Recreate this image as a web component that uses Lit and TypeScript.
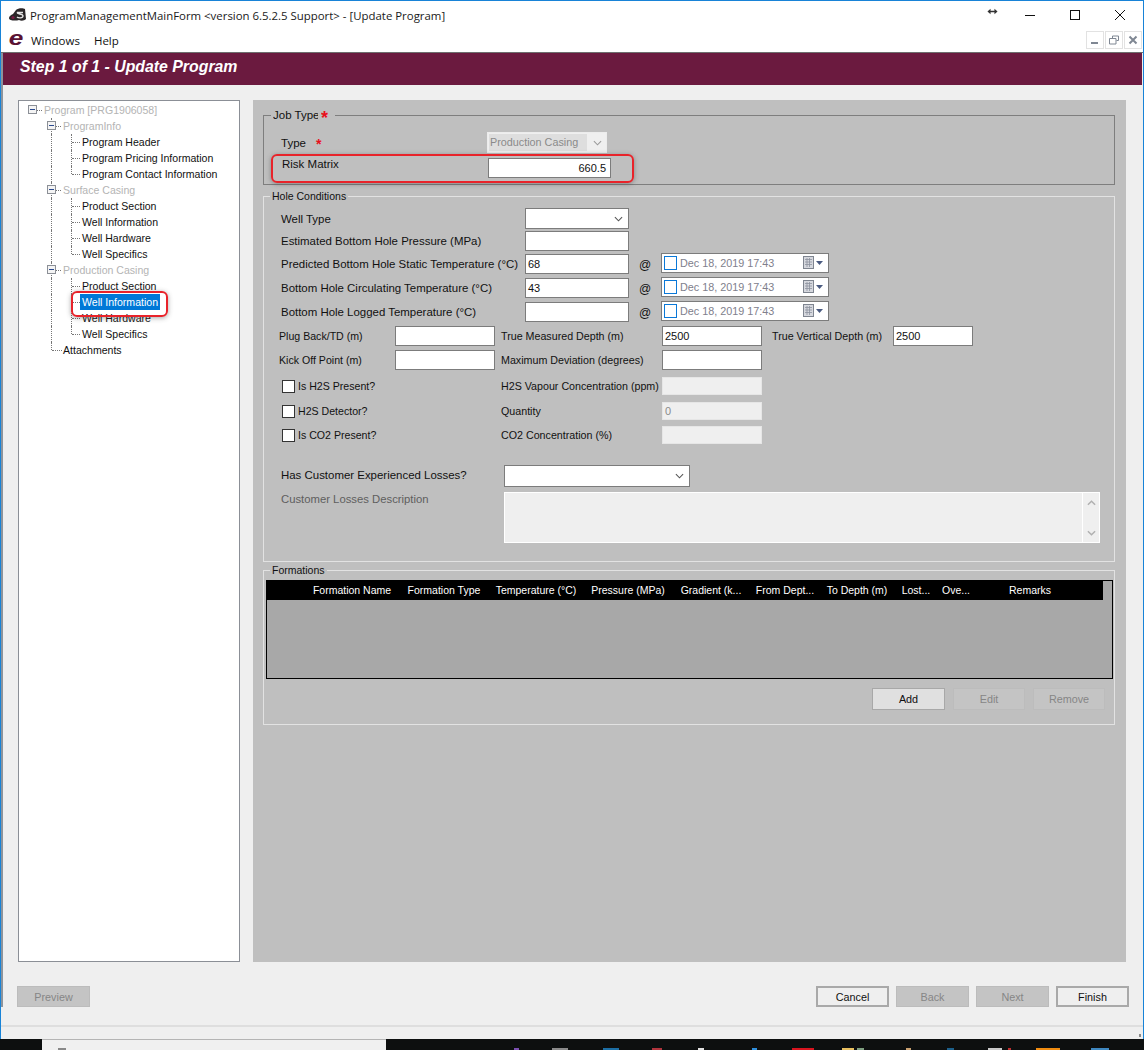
import { css, html, LitElement, svg } from "lit";
import { customElement } from "lit/decorators.js";

type TreeNode = { label: string; level: number; group?: boolean; last?: boolean; selected?: boolean };

const TREE: TreeNode[] = [
  { label: "Program [PRG1906058]", level: 0, group: true },
  { label: "ProgramInfo", level: 1, group: true },
  { label: "Program Header", level: 2 },
  { label: "Program Pricing Information", level: 2 },
  { label: "Program Contact Information", level: 2, last: true },
  { label: "Surface Casing", level: 1, group: true },
  { label: "Product Section", level: 2 },
  { label: "Well Information", level: 2 },
  { label: "Well Hardware", level: 2 },
  { label: "Well Specifics", level: 2, last: true },
  { label: "Production Casing", level: 1, group: true },
  { label: "Product Section", level: 2 },
  { label: "Well Information", level: 2, selected: true },
  { label: "Well Hardware", level: 2 },
  { label: "Well Specifics", level: 2, last: true },
  { label: "Attachments", level: 1, last: true },
];

const COLUMNS: [string, number][] = [
  ["Formation Name", 92],
  ["Formation Type", 92],
  ["Temperature (°C)", 92],
  ["Pressure (MPa)", 92],
  ["Gradient (k...", 74],
  ["From Dept...", 74],
  ["To Depth (m)", 70],
  ["Lost...", 48],
  ["Ove...", 32],
  ["Remarks", 116],
];

// tops of the tray and pinned icons, the rest falls below the screenshot
const TASK_ICONS: [number, number, string][] = [
  [514, 5, "#7b4fb0"],
  [552, 16, "#8a8a8a"],
  [603, 16, "#1c6ea4"],
  [652, 10, "#b0343c"],
  [698, 6, "#e0e0e0"],
  [752, 5, "#2f8fdc"],
  [792, 22, "#d8141e"],
  [842, 12, "#e8c060"],
  [857, 7, "#7f9f80"],
  [906, 5, "#c8a070"],
  [947, 7, "#1c5f8a"],
  [988, 14, "#c8c8c8"],
  [1008, 3, "#c03030"],
  [1036, 24, "#f08c10"],
  [1091, 18, "#3f88c0"],
];

const chevron = svg`<svg class="chev" viewBox="0 0 10 6"><path d="M1 1l4 4 4-4" fill="none" stroke="currentColor" stroke-width="1.2"/></svg>`;

@customElement("app-root")
export class AppRoot extends LitElement {
  static override styles = css`
    :host {
      display: block;
      width: 1144px;
      height: 1050px;
      overflow: hidden;
      position: relative;
      font-family: "Liberation Sans", Arial, sans-serif;
      font-size: 12px;
      color: #111;
      background: #0d0f0f;
    }

    .window {
      height: 1039px;
      box-sizing: border-box;
      border: 1px solid #1883d7;
      border-bottom: none;
      background: #fff;
      display: flex;
      flex-direction: column;
    }

    .titlebar {
      height: 27px;
      display: flex;
      align-items: center;
      position: relative;
      font-family: "Open Sans", sans-serif;
      font-size: 11.42px;
      color: #1a1a1a;
    }

    .app-icon {
      width: 17px;
      height: 14px;
      margin-left: 8px;
      margin-right: 4px;
      margin-top: 1px;
    }

    .title-text {
      white-space: nowrap;
      padding-top: 1px;
    }

    .win-controls {
      position: absolute;
      top: 0;
      right: 1px;
      display: flex;
      align-items: center;
    }

    .resize {
      position: absolute;
      top: 7px;
      left: 986px;
      width: 11px;
      height: 7px;
    }

    .win-btn {
      width: 45px;
      height: 27px;
      display: flex;
      align-items: center;
      justify-content: center;
    }

    .win-btn svg {
      width: 12px;
      height: 12px;
    }

    .menubar {
      height: 24px;
      display: flex;
      align-items: center;
      font-family: "Open Sans", sans-serif;
      font-size: 11.5px;
      position: relative;
      box-sizing: border-box;
    }

    .logo-e {
      width: 16px;
      margin-left: 7px;
      margin-right: 7px;
      font: italic bold 21px/20px "Liberation Sans", sans-serif;
      color: #5a1233;
      text-align: center;
      margin-top: -5px;
      transform: scaleX(1.25);
    }

    .menubar span.item {
      margin-right: 14px;
    }

    .mdi {
      margin-left: auto;
      margin-right: 1px;
      display: flex;
      gap: 1px;
    }

    .mdi div {
      width: 18px;
      height: 18px;
      box-sizing: border-box;
      border: 1px solid #e2e2e2;
      display: flex;
      align-items: center;
      justify-content: center;
    }

    .mdi svg {
      width: 10px;
      height: 10px;
    }

    .frame {
      flex: 1;
      display: flex;
      flex-direction: column;
      background: #efefef;
      border-top: 1px solid #6e6e6e;
      min-height: 0;
    }

    .content {
      border-left: 2px solid #8d949c;
    }

    .banner {
      height: 32px;
      margin-right: 1px;
      background: #6b1a3f;
      color: #fff;
      font: italic bold 15.85px/28px "Liberation Sans", Arial, sans-serif;
      padding-left: 17px;
    }

    .body {
      display: grid;
      grid-template-columns: 222px 873px;
      column-gap: 13px;
      height: 862px;
      padding: 15px 0 0 15px;
    }

    .tree {
      box-sizing: border-box;
      background: #fff;
      border: 1px solid #8b8f96;
      padding-top: 1px;
    }

    .node {
      height: 16px;
      position: relative;
      line-height: 16px;
      white-space: nowrap;
      font-size: 10.55px;
    }

    .node .text {
      position: absolute;
      top: 0;
      height: 16px;
      padding: 0 2px;
    }

    .node.group .text {
      color: #b4b4b4;
    }

    .node.selected .text {
      background: #0078d7;
      color: #fff;
    }

    .guide-v {
      position: absolute;
      top: 0;
      bottom: 0;
      border-left: 1px dotted #777;
    }

    .guide-v.half {
      bottom: 8px;
    }

    .guide-h {
      position: absolute;
      top: 8px;
      border-top: 1px dotted #777;
    }

    .expander {
      position: absolute;
      top: 3px;
      width: 9px;
      height: 9px;
      box-sizing: border-box;
      border: 1px solid #8b8f96;
      background: #f4f4f4;
    }

    .expander::after {
      content: "";
      position: absolute;
      left: 1px;
      right: 1px;
      top: 3px;
      height: 1px;
      background: #2a4a90;
    }

    .panel {
      background: #bfbfbf;
      padding: 15px 0 0 10px;
      box-sizing: border-box;
    }

    .group-box {
      width: 852px;
      box-sizing: border-box;
      border: 1px solid #e2e2e2;
      position: relative;
    }

    .group-box > .legend {
      position: absolute;
      top: -8px;
      left: 6px;
      padding: 0 2px;
      background: #bfbfbf;
      line-height: 15px;
      font-size: 10.5px;
    }

    .job {
      height: 70px;
      border-color: #7e7e7e;
    }

    .job > .legend {
      display: flex;
      left: 7px;
      width: 60px;
      overflow: hidden;
    }

    .job .legend span {
      display: block;
      width: 45px;
      overflow: hidden;
      white-space: nowrap;
      font-size: 11.5px;
    }

    .star {
      color: #e8101c;
      font-weight: bold;
      font-size: 14px;
      line-height: 17px;
    }

    .job .legend .star {
      width: auto;
      margin-left: 3px;
      font-size: 18px;
      line-height: 20px;
    }

    .job-type {
      display: flex;
      align-items: center;
      height: 21px;
      margin-top: 16px;
      padding-left: 17px;
      font-size: 11.5px;
    }

    .job-type .lbl {
      width: 35px;
    }

    .job-type .star {
      width: 171px;
      padding-top: 4px;
    }

    .sel-off {
      width: 120px;
      height: 21px;
      box-sizing: border-box;
      border: 1px solid #ececec;
      background: #efefef;
      display: flex;
      align-items: center;
      color: #8a8a8a;
      font-size: 10.8px;
      padding: 1px;
    }

    .sel-off .val {
      width: 98px;
      height: 17px;
      line-height: 17px;
      padding-left: 1px;
      box-sizing: border-box;
      background: #dedede;
    }

    .sel-off .chev {
      color: #9a9a9a;
      margin-left: 6px;
    }

    .chev {
      width: 9px;
      height: 6px;
    }

    .risk {
      display: flex;
      align-items: flex-start;
      height: 20px;
      margin-top: 5px;
      padding-left: 18px;
      font-size: 11.5px;
    }

    .risk .lbl {
      width: 206px;
    }

    .risk .field {
      width: 123px;
      text-align: right;
      padding-right: 4px;
    }

    .field {
      height: 20px;
      box-sizing: border-box;
      border: 1px solid #7c7c7c;
      background: #fff;
      line-height: 18px;
      padding-left: 2px;
      font-size: 11px;
      flex: none;
    }

    .field.off {
      height: 18px;
      margin-top: 1px;
      line-height: 16px;
      border: 1px solid #e6e6e6;
      background: #efefef;
      color: #8a8a8a;
    }

    .w104 {
      width: 104px;
    }

    .w100 {
      width: 100px;
    }

    .w80 {
      width: 80px;
    }

    .select {
      width: 104px;
      height: 21px;
      box-sizing: border-box;
      border: 1px solid #7c7c7c;
      background: #fff;
      display: flex;
      align-items: center;
      justify-content: flex-end;
      padding-right: 5px;
      color: #555;
    }

    .select.wide {
      width: 186px;
      height: 22px;
    }

    .hole {
      height: 366px;
      margin-top: 11px;
      padding-top: 11px;
    }

    .row {
      display: flex;
      align-items: flex-start;
      white-space: nowrap;
      line-height: 20px;
      font-size: 11.45px;
    }

    .row.h23 {
      height: 23px;
    }

    .row.h24 {
      height: 24px;
    }

    .row.h25 {
      height: 25px;
    }

    .wide-label {
      width: 244px;
      padding-left: 17px;
      box-sizing: content-box;
      flex: none;
    }

    .well-type {
      line-height: 22px;
    }

    .at {
      width: 32px;
      padding-left: 10px;
      margin-top: 1px;
      box-sizing: border-box;
      font-size: 12px;
      flex: none;
    }

    .date {
      width: 168px;
      height: 20px;
      margin-top: -1px;
      box-sizing: border-box;
      border: 1px solid #7c7c7c;
      background: #fff;
      display: flex;
      align-items: center;
      color: #80808c;
      font-size: 10.8px;
      padding-left: 2px;
      flex: none;
    }

    .date i {
      width: 13px;
      height: 14px;
      box-sizing: border-box;
      border: 1px solid #0a78d8;
      background: #fff;
      margin-right: 3px;
      flex: none;
    }

    .date .cal {
      width: 20px;
      height: 14px;
      margin-left: auto;
      margin-right: 5px;
    }

    .lbl-a {
      width: 116px;
      padding-left: 15px;
      font-size: 10.6px;
      flex: none;
    }

    .lbl-b {
      width: 161px;
      margin-left: 6px;
      font-size: 10.7px;
      flex: none;
    }

    .lbl-b.flush {
      margin-left: 0;
    }

    .lbl-c {
      width: 121px;
      margin-left: 10px;
      font-size: 10.7px;
      flex: none;
    }

    .check-cell {
      width: 219px;
      display: flex;
      align-items: center;
      height: 20px;
      padding-left: 18px;
      font-size: 10.6px;
      flex: none;
    }

    .check-cell i {
      width: 13px;
      height: 13px;
      box-sizing: border-box;
      border: 1px solid #333;
      background: #fff;
      margin-right: 3px;
      flex: none;
    }

    .spaced {
      margin-top: 20px;
    }

    .loss-label {
      width: 223px;
      padding-left: 17px;
      flex: none;
    }

    .desc-row {
      margin-top: 5px;
      display: flex;
      align-items: flex-start;
      font-size: 11.3px;
    }

    .desc-row .loss-label {
      color: #5e5e5e;
      line-height: 14px;
    }

    .desc {
      width: 596px;
      height: 51px;
      box-sizing: border-box;
      border: 1px solid #fff;
      background: #efefef;
      display: flex;
      justify-content: flex-end;
    }

    .desc .bar {
      width: 16px;
      border-left: 1px solid #fff;
      display: flex;
      flex-direction: column;
      justify-content: space-between;
      align-items: center;
      padding: 7px 0 6px;
      color: #b0b0b0;
    }

    .desc .bar .chev.up {
      transform: rotate(180deg);
    }

    .formations {
      height: 155px;
      margin-top: 8px;
      padding: 9px 0 0 2px;
    }

    .table {
      width: 847px;
      height: 99px;
      box-sizing: border-box;
      border: 1px solid #000;
      background: #a8a8a8;
    }

    .thead {
      height: 19px;
      width: 836px;
      background: #000;
      color: #fff;
      display: flex;
      padding-left: 39px;
      box-sizing: border-box;
      line-height: 19px;
      font-size: 10.5px;
      white-space: nowrap;
    }

    .thead div {
      text-align: center;
      flex: none;
    }

    .grid-actions {
      display: flex;
      justify-content: flex-end;
      gap: 8px;
      margin-top: 9px;
      padding-right: 9px;
    }

    .btn {
      width: 73px;
      height: 21px;
      box-sizing: border-box;
      background: #c4c4c4;
      border: 1px solid #bcbcbc;
      color: #868686;
      display: flex;
      align-items: center;
      justify-content: center;
      font-size: 10.8px;
      flex: none;
    }

    .btn.on {
      color: #111;
      background: #efefef;
      border: 2px solid #a9a9a9;
    }

    .btn.add {
      height: 22px;
      background: #e0e0e0;
      border: 1px solid #a8a8a8;
    }

    .grid-actions .btn:not(.add) {
      width: 72px;
      height: 22px;
    }

    .footer {
      display: flex;
      gap: 7px;
      padding: 24px 14px 0 14px;
    }

    .footer .btn:first-child {
      margin-right: auto;
    }

    .status {
      margin-top: 18px;
      flex: 1;
      border-top: 2px solid #dedede;
      position: relative;
    }

    .status::after {
      content: "";
      position: absolute;
      right: 2px;
      bottom: 2px;
      width: 2px;
      height: 3px;
      background: #8a8a8a;
    }

    .taskbar {
      height: 11px;
      position: relative;
      background: #0d0f0f;
    }

    .search {
      position: absolute;
      left: 42px;
      top: 0;
      width: 344px;
      height: 11px;
      box-sizing: border-box;
      background: #f0f0f0;
      border-top: 1px solid #b4b4b4;
    }

    .search::after {
      content: "";
      position: absolute;
      left: 16px;
      top: 8px;
      width: 8px;
      height: 2px;
      background: #888;
    }

    .task-icon {
      position: absolute;
      top: 9px;
      height: 2px;
    }

    .callout {
      position: absolute;
      box-sizing: border-box;
      border: 2px solid #e8232a;
      border-radius: 6px;
      box-shadow: 0 1px 5px rgba(60, 60, 60, 0.45);
      pointer-events: none;
    }

    .callout.risk-mark {
      left: 271px;
      top: 154px;
      width: 363px;
      height: 29px;
    }

    .callout.tree-mark {
      left: 71px;
      top: 291px;
      width: 97px;
      height: 26px;
    }
  `;

  private renderNode(node: TreeNode, index: number) {
    const trunkEnd = TREE.length - 1;
    const inTrunk = node.level >= 1;
    const left = node.level === 0 ? 42 : node.level === 1 ? 61 : 80;
    return html`
      <div class="node ${node.group ? "group" : ""} ${node.selected ? "selected" : ""}">
        ${inTrunk
          ? html`<span class="guide-v ${index === trunkEnd ? "half" : ""}" style="left:32px"></span>`
          : ""}
        ${node.level === 2
          ? html`<span class="guide-v ${node.last ? "half" : ""}" style="left:52px"></span>
              <span class="guide-h" style="left:53px;width:8px"></span>`
          : ""}
        ${node.level === 1 && !node.group
          ? html`<span class="guide-h" style="left:33px;width:10px"></span>`
          : ""}
        ${node.group
          ? html`<span class="expander" style="left:${node.level === 0 ? 9 : 28}px"></span>
              <span class="guide-h" style="left:${node.level === 0 ? 18 : 37}px;width:5px"></span>`
          : ""}
        <span class="text" style="left:${left - 19}px">${node.label}</span>
      </div>
    `;
  }

  private renderDate() {
    return html`
      <div class="date">
        <i></i>Dec 18, 2019 17:43
        <svg class="cal" viewBox="0 0 20 14">
          <rect x="0.5" y="0.5" width="10" height="12" fill="#d6d8de" stroke="#7f8590" />
          <path d="M2 3.500h7M2 6h7M2 8.500h7M4 2v9M6.500 2v9" stroke="#8d93a0" stroke-width="0.8" />
          <path d="M13 5h7l-3.500 4z" fill="#4a5a80" />
        </svg>
      </div>
    `;
  }

  override render() {
    return html`
      <div class="window">
        <div class="titlebar">
          <svg class="app-icon" viewBox="0 0 17 14">
            <path d="M0 10c0-2 2-3 4-4l3-4c2-2 7-2 9-1l1 10c-2 2-5 2-7 1-3 1-10 1-10-2z" fill="#2a2628" />
            <path d="M8 4.500h6M8 4.500c0 2 6 1 6 3.500s-5 2-6 1" fill="none" stroke="#e6e6e6" stroke-width="1.300" />
            <circle cx="4" cy="9.500" r="1.600" fill="#7a1a44" />
          </svg>
          <span class="title-text">ProgramManagementMainForm &lt;version 6.5.2.5 Support&gt; - [Update Program]</span>
          <svg class="resize" viewBox="0 0 13 9">
            <path d="M0 4.500 4 1v2.500h5V1l4 3.500L9 8V5.500H4V8z" fill="#333" />
          </svg>
          <div class="win-controls">
            <div class="win-btn">
              <svg viewBox="0 0 12 12"><path d="M1 6.500h10" stroke="#111" /></svg>
            </div>
            <div class="win-btn">
              <svg viewBox="0 0 12 12"><rect x="1.500" y="1.500" width="9" height="9" fill="none" stroke="#111" /></svg>
            </div>
            <div class="win-btn">
              <svg viewBox="0 0 12 12"><path d="M1 1l10 10M11 1 1 11" stroke="#111" /></svg>
            </div>
          </div>
        </div>
        <div class="menubar">
          <span class="logo-e">e</span>
          <span class="item">Windows</span>
          <span class="item">Help</span>
          <div class="mdi">
            <div>
              <svg viewBox="0 0 10 10"><path d="M1 8h7" stroke="#7f8793" stroke-width="2" /></svg>
            </div>
            <div>
              <svg viewBox="0 0 10 10">
                <path d="M3.500 3V1h6v4.500h-2M.5 3.500h6.500V9H.5z" fill="none" stroke="#7f8793" />
              </svg>
            </div>
            <div>
              <svg viewBox="0 0 10 10"><path d="M1.500 1.500l7 7M8.500 1.500l-7 7" stroke="#7f8793" stroke-width="2" /></svg>
            </div>
          </div>
        </div>
        <div class="frame">
          <div class="content">
            <div class="banner">Step 1 of 1 - Update Program</div>
            <div class="body">
              <div class="tree">${TREE.map((node, i) => this.renderNode(node, i))}</div>
              <div class="panel">
                <div class="group-box job">
                  <div class="legend"><span>Job Type</span><span class="star">*</span></div>
                  <div class="job-type">
                    <span class="lbl">Type</span>
                    <span class="star">*</span>
                    <div class="sel-off"><div class="val">Production Casing</div>${chevron}</div>
                  </div>
                  <div class="risk">
                    <span class="lbl">Risk Matrix</span>
                    <div class="field">660.5</div>
                  </div>
                </div>

                <div class="group-box hole">
                  <div class="legend">Hole Conditions</div>
                  <div class="row h23">
                    <div class="wide-label well-type">Well Type</div>
                    <div class="select">${chevron}</div>
                  </div>
                  <div class="row h23">
                    <div class="wide-label">Estimated Bottom Hole Pressure (MPa)</div>
                    <div class="field w104"></div>
                  </div>
                  <div class="row h24">
                    <div class="wide-label">Predicted Bottom Hole Static Temperature (°C)</div>
                    <div class="field w104">68</div>
                    <div class="at">@</div>
                    ${this.renderDate()}
                  </div>
                  <div class="row h24">
                    <div class="wide-label">Bottom Hole Circulating Temperature (°C)</div>
                    <div class="field w104">43</div>
                    <div class="at">@</div>
                    ${this.renderDate()}
                  </div>
                  <div class="row h24">
                    <div class="wide-label">Bottom Hole Logged Temperature (°C)</div>
                    <div class="field w104"></div>
                    <div class="at">@</div>
                    ${this.renderDate()}
                  </div>
                  <div class="row h24">
                    <div class="lbl-a">Plug Back/TD (m)</div>
                    <div class="field w100"></div>
                    <div class="lbl-b">True Measured Depth (m)</div>
                    <div class="field w100">2500</div>
                    <div class="lbl-c">True Vertical Depth (m)</div>
                    <div class="field w80">2500</div>
                  </div>
                  <div class="row" style="height:26px">
                    <div class="lbl-a">Kick Off Point (m)</div>
                    <div class="field w100"></div>
                    <div class="lbl-b">Maximum Deviation (degrees)</div>
                    <div class="field w100"></div>
                  </div>
                  <div class="row h25">
                    <div class="check-cell"><i></i>Is H2S Present?</div>
                    <div class="lbl-b flush">H2S Vapour Concentration (ppm)</div>
                    <div class="field w100 off"></div>
                  </div>
                  <div class="row h24">
                    <div class="check-cell"><i></i>H2S Detector?</div>
                    <div class="lbl-b flush">Quantity</div>
                    <div class="field w100 off">0</div>
                  </div>
                  <div class="row">
                    <div class="check-cell"><i></i>Is CO2 Present?</div>
                    <div class="lbl-b flush">CO2 Concentration (%)</div>
                    <div class="field w100 off"></div>
                  </div>
                  <div class="row spaced">
                    <div class="loss-label">Has Customer Experienced Losses?</div>
                    <div class="select wide">${chevron}</div>
                  </div>
                  <div class="desc-row">
                    <div class="loss-label">Customer Losses Description</div>
                    <div class="desc">
                      <div class="bar">
                        <svg class="chev up" viewBox="0 0 10 6"><path d="M1 1l4 4 4-4" fill="none" stroke="currentColor" stroke-width="1.600" /></svg>
                        <svg class="chev" viewBox="0 0 10 6"><path d="M1 1l4 4 4-4" fill="none" stroke="currentColor" stroke-width="1.600" /></svg>
                      </div>
                    </div>
                  </div>
                </div>

                <div class="group-box formations">
                  <div class="legend">Formations</div>
                  <div class="table">
                    <div class="thead">
                      ${COLUMNS.map(([name, width]) => html`<div style="width:${width}px">${name}</div>`)}
                    </div>
                  </div>
                  <div class="grid-actions">
                    <div class="btn on add">Add</div>
                    <div class="btn">Edit</div>
                    <div class="btn">Remove</div>
                  </div>
                </div>
              </div>
            </div>
            <div class="footer">
              <div class="btn">Preview</div>
              <div class="btn on">Cancel</div>
              <div class="btn">Back</div>
              <div class="btn">Next</div>
              <div class="btn on">Finish</div>
            </div>
          </div>
          <div class="status"></div>
        </div>
      </div>
      <div class="taskbar">
        <div class="search"></div>
        ${TASK_ICONS.map(
          ([left, width, color]) =>
            html`<span class="task-icon" style="left:${left}px;width:${width}px;background:${color}"></span>`,
        )}
      </div>
      <div class="callout risk-mark"></div>
      <div class="callout tree-mark"></div>
    `;
  }
}

declare global {
  interface HTMLElementTagNameMap {
    "app-root": AppRoot;
  }
}
